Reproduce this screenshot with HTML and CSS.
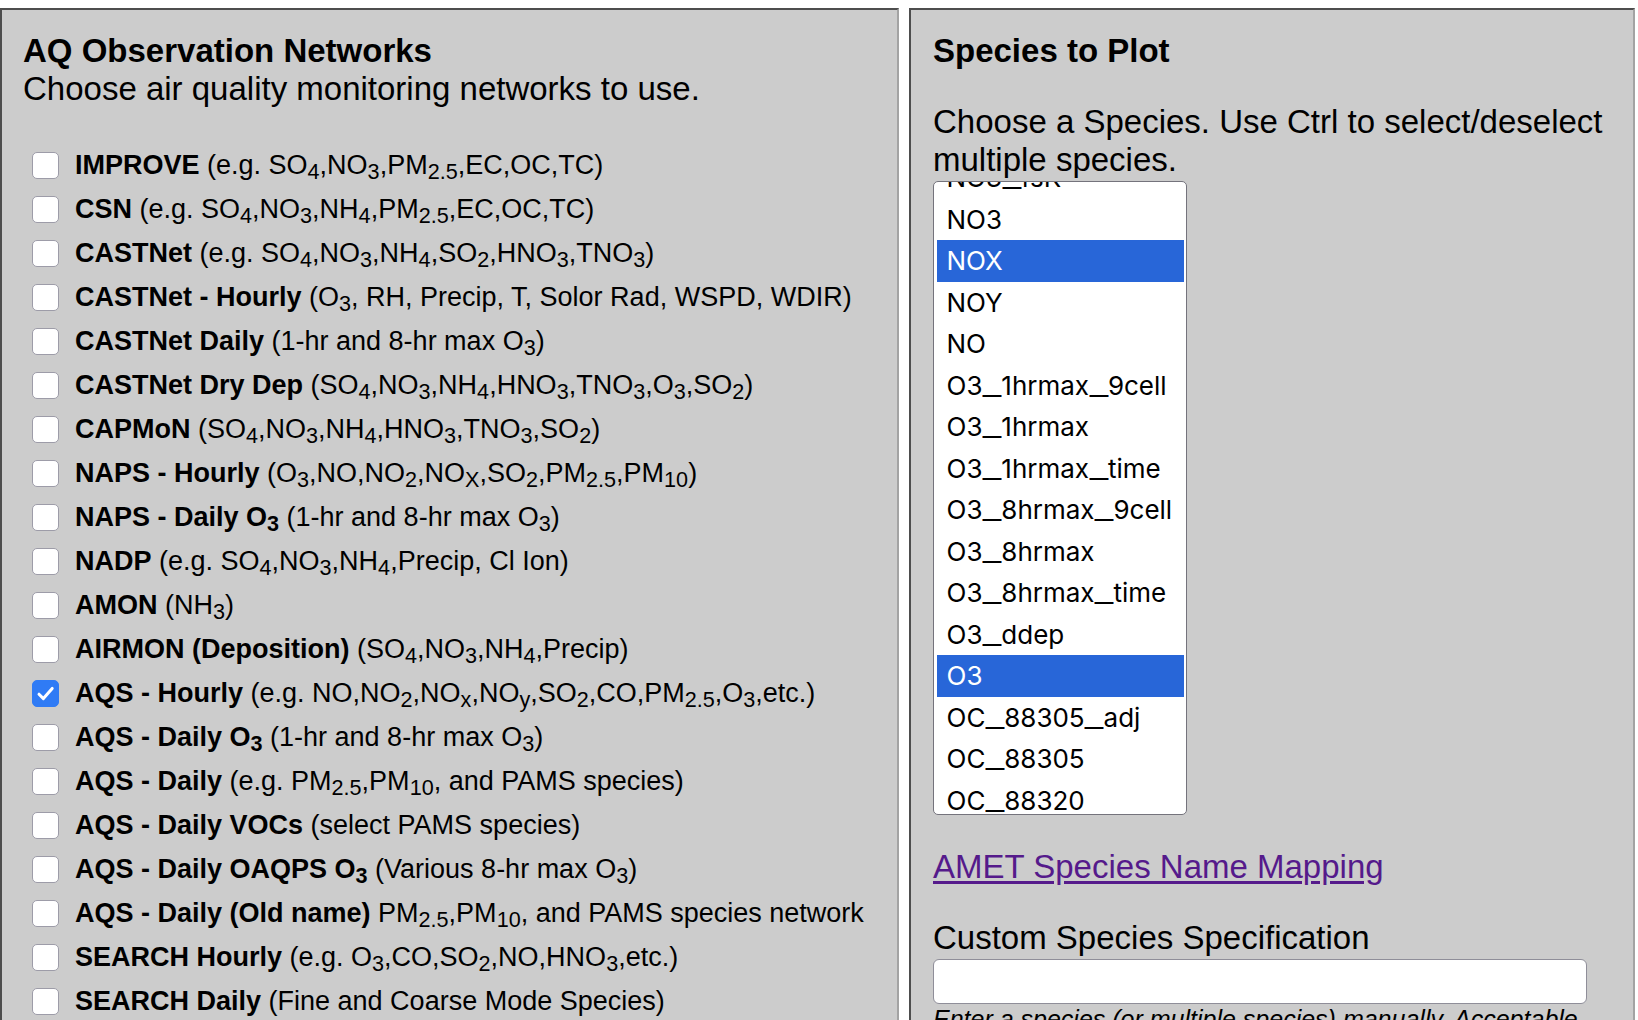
FILE: index.html
```
<!DOCTYPE html>
<html lang="en">
<head>
<meta charset="utf-8">
<title>AMET Observation Networks</title>
<link rel="stylesheet" href="styles.css">
</head>
<body>
<div class="page">
  <section class="panel panel-left">
    <h2 class="title">AQ Observation Networks</h2>
    <p class="desc">Choose air quality monitoring networks to use.</p>
    <ul class="networks">
      <li class="net"><span class="cb"></span><span class="lbl"><b>IMPROVE</b> (e.g. SO<sub>4</sub>,NO<sub>3</sub>,PM<sub>2.5</sub>,EC,OC,TC)</span></li>
      <li class="net"><span class="cb"></span><span class="lbl"><b>CSN</b> (e.g. SO<sub>4</sub>,NO<sub>3</sub>,NH<sub>4</sub>,PM<sub>2.5</sub>,EC,OC,TC)</span></li>
      <li class="net"><span class="cb"></span><span class="lbl"><b>CASTNet</b> (e.g. SO<sub>4</sub>,NO<sub>3</sub>,NH<sub>4</sub>,SO<sub>2</sub>,HNO<sub>3</sub>,TNO<sub>3</sub>)</span></li>
      <li class="net"><span class="cb"></span><span class="lbl"><b>CASTNet - Hourly</b> (O<sub>3</sub>, RH, Precip, T, Solor Rad, WSPD, WDIR)</span></li>
      <li class="net"><span class="cb"></span><span class="lbl"><b>CASTNet Daily</b> (1-hr and 8-hr max O<sub>3</sub>)</span></li>
      <li class="net"><span class="cb"></span><span class="lbl"><b>CASTNet Dry Dep</b> (SO<sub>4</sub>,NO<sub>3</sub>,NH<sub>4</sub>,HNO<sub>3</sub>,TNO<sub>3</sub>,O<sub>3</sub>,SO<sub>2</sub>)</span></li>
      <li class="net"><span class="cb"></span><span class="lbl"><b>CAPMoN</b> (SO<sub>4</sub>,NO<sub>3</sub>,NH<sub>4</sub>,HNO<sub>3</sub>,TNO<sub>3</sub>,SO<sub>2</sub>)</span></li>
      <li class="net"><span class="cb"></span><span class="lbl"><b>NAPS - Hourly</b> (O<sub>3</sub>,NO,NO<sub>2</sub>,NO<sub>X</sub>,SO<sub>2</sub>,PM<sub>2.5</sub>,PM<sub>10</sub>)</span></li>
      <li class="net"><span class="cb"></span><span class="lbl"><b>NAPS - Daily O<sub>3</sub></b> (1-hr and 8-hr max O<sub>3</sub>)</span></li>
      <li class="net"><span class="cb"></span><span class="lbl"><b>NADP</b> (e.g. SO<sub>4</sub>,NO<sub>3</sub>,NH<sub>4</sub>,Precip, Cl Ion)</span></li>
      <li class="net"><span class="cb"></span><span class="lbl"><b>AMON</b> (NH<sub>3</sub>)</span></li>
      <li class="net"><span class="cb"></span><span class="lbl"><b>AIRMON (Deposition)</b> (SO<sub>4</sub>,NO<sub>3</sub>,NH<sub>4</sub>,Precip)</span></li>
      <li class="net"><span class="cb cb-on"><svg viewBox="0 0 27 27" width="27" height="27"><path d="M7 14.2 L11.4 18.6 L20.2 8.4" fill="none" stroke="#fff" stroke-width="3" stroke-linecap="round" stroke-linejoin="round"/></svg></span><span class="lbl"><b>AQS - Hourly</b> (e.g. NO,NO<sub>2</sub>,NO<sub>x</sub>,NO<sub>y</sub>,SO<sub>2</sub>,CO,PM<sub>2.5</sub>,O<sub>3</sub>,etc.)</span></li>
      <li class="net"><span class="cb"></span><span class="lbl"><b>AQS - Daily O<sub>3</sub></b> (1-hr and 8-hr max O<sub>3</sub>)</span></li>
      <li class="net"><span class="cb"></span><span class="lbl"><b>AQS - Daily</b> (e.g. PM<sub>2.5</sub>,PM<sub>10</sub>, and PAMS species)</span></li>
      <li class="net"><span class="cb"></span><span class="lbl"><b>AQS - Daily VOCs</b> (select PAMS species)</span></li>
      <li class="net"><span class="cb"></span><span class="lbl"><b>AQS - Daily OAQPS O<sub>3</sub></b> (Various 8-hr max O<sub>3</sub>)</span></li>
      <li class="net"><span class="cb"></span><span class="lbl"><b>AQS - Daily (Old name)</b> PM<sub>2.5</sub>,PM<sub>10</sub>, and PAMS species network</span></li>
      <li class="net"><span class="cb"></span><span class="lbl"><b>SEARCH Hourly</b> (e.g. O<sub>3</sub>,CO,SO<sub>2</sub>,NO,HNO<sub>3</sub>,etc.)</span></li>
      <li class="net"><span class="cb"></span><span class="lbl"><b>SEARCH Daily</b> (Fine and Coarse Mode Species)</span></li>
    </ul>
  </section>

  <section class="panel panel-right">
    <h2 class="title">Species to Plot</h2>
    <p class="desc desc-species">Choose a Species. Use Ctrl to select/deselect multiple species.</p>
    <div class="listbox">
      <ul class="options">
        <li class="opt">NO3<span class="u">_</span>fsK</li>
        <li class="opt">NO3</li>
        <li class="opt opt-sel">NOX</li>
        <li class="opt">NOY</li>
        <li class="opt">NO</li>
        <li class="opt">O3<span class="u">_</span>1hrmax<span class="u">_</span>9cell</li>
        <li class="opt">O3<span class="u">_</span>1hrmax</li>
        <li class="opt">O3<span class="u">_</span>1hrmax<span class="u">_</span>time</li>
        <li class="opt">O3<span class="u">_</span>8hrmax<span class="u">_</span>9cell</li>
        <li class="opt">O3<span class="u">_</span>8hrmax</li>
        <li class="opt">O3<span class="u">_</span>8hrmax<span class="u">_</span>time</li>
        <li class="opt">O3<span class="u">_</span>ddep</li>
        <li class="opt opt-sel">O3</li>
        <li class="opt">OC<span class="u">_</span>88305<span class="u">_</span>adj</li>
        <li class="opt">OC<span class="u">_</span>88305</li>
        <li class="opt">OC<span class="u">_</span>88320</li>
        <li class="opt">OC</li>
      </ul>
    </div>
    <p class="link-line"><a class="maplink" href="#">AMET Species Name Mapping</a></p>
    <p class="custom-label">Custom Species Specification</p>
    <div class="textbox"></div>
    <p class="hint">Enter a species (or multiple species) manually. Acceptable formats are shown below.</p>
  </section>
</div>
</body>
</html>
```

FILE: styles.css
```
html, body {
  margin: 0;
  padding: 0;
  background: #ffffff;
}

body {
  padding: 8px 3px 0 0;
  font-family: "Liberation Sans", Arial, Helvetica, sans-serif;
  color: #000;
  overflow: hidden;
  height: 1012px;
}

.page {
  display: flex;
  align-items: flex-start;
  gap: 10px;
}

.panel {
  background: #cccccc;
  border-top: 2px solid #4d4d4d;
  border-left: 2px solid #4d4d4d;
  border-right: 2px solid #a3a3a3;
  box-sizing: border-box;
  min-height: 1100px;
}

.panel-left {
  width: 899px;
  flex: none;
  padding: 21px 0 0 21px;
}

.panel-right {
  flex: 1;
  min-width: 0;
  overflow: hidden;
  padding: 21px 0 0 22px;
}

.title {
  margin: 0;
  font-size: 33px;
  line-height: 39px;
  font-weight: bold;
}

.desc {
  margin: 0;
  font-size: 33px;
  line-height: 38px;
}

.networks {
  list-style: none;
  margin: 35px 0 0 0;
  padding: 0 0 0 9px;
}

.net {
  display: flex;
  align-items: center;
  height: 44px;
  font-size: 27px;
  line-height: 32px;
  white-space: nowrap;
}

.cb {
  flex: none;
  width: 27px;
  height: 27px;
  box-sizing: border-box;
  border: 1.5px solid #9d9ca8;
  border-radius: 5px;
  background: #ffffff;
  margin-right: 16px;
  display: flex;
  align-items: center;
  justify-content: center;
}

.cb-on {
  background: #2f7bf5;
  border-color: #2f7bf5;
}

.cb-on svg {
  display: block;
  flex: none;
}

.lbl sub {
  font-size: 0.8em;
  line-height: 0;
  vertical-align: -0.25em;
}

/* Right panel */
.desc-species {
  margin-top: 33px;
  width: 690px;
}

.listbox {
  margin-top: 2px;
  width: 254px;
  height: 634px;
  box-sizing: border-box;
  border: 1.5px solid #74737c;
  border-radius: 5px;
  background: #ffffff;
  padding: 3px 2.5px;
  overflow: hidden;
}

.options {
  list-style: none;
  margin: -28px 0 0 0;
  padding: 0;
}

.opt {
  height: 41.5px;
  line-height: 41.5px;
  padding-left: 10px;
  font-family: "Inter", "Open Sans", sans-serif;
  font-size: 26px;
  color: #000;
  white-space: nowrap;
}

.opt .u {
  display: inline-block;
  margin: 0 3.5px;
  transform: scaleX(1.6);
}

.opt-sel {
  background: #2866d8;
  color: #ffffff;
}

.link-line {
  margin: 33px 0 0 0;
  font-size: 33px;
  line-height: 38px;
}

.maplink {
  color: #551a8b;
  text-decoration: underline;
  text-underline-offset: 3px;
}

.custom-label {
  margin: 33px 0 0 0;
  font-size: 33px;
  line-height: 38px;
}

.textbox {
  margin-top: 2px;
  width: 654px;
  height: 45px;
  box-sizing: border-box;
  border: 1.5px solid #8f8e99;
  border-radius: 6px;
  background: #ffffff;
}

.hint {
  margin: 0;
  font-size: 25px;
  line-height: 30px;
  font-style: italic;
}
```
